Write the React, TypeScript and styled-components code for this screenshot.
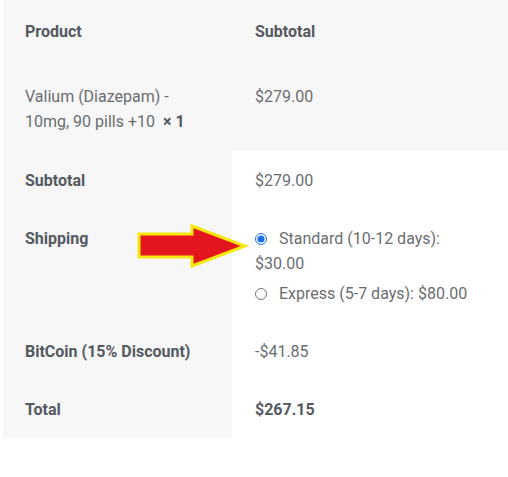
import React from 'react';
import styled, { createGlobalStyle } from 'styled-components';

const GlobalStyle = createGlobalStyle`
	body {
		margin: 0;
		background: #ffffff;
		font-family: Roboto, 'Liberation Sans', sans-serif;
	}
`;

type CellProps = { $white?: boolean };

function Arrow() {
	return (
		<View.Arrow width="112" height="46" viewBox="0 0 112 46">
			<polygon
				points="2,10 55,10 55,2 108,22 55,42 55,33 2,33"
				fill="#e3161f"
				stroke="#f6e80f"
				strokeWidth="3"
				strokeLinejoin="miter"
			/>
		</View.Arrow>
	);
}

function App() {
	return (
		<>
			<GlobalStyle />
			<View.Wrap>
				<View.Table>
					<tbody>
						<View.Row>
							<Text.Head>Product</Text.Head>
							<Text.Head>Subtotal</Text.Head>
						</View.Row>
						<View.Row>
							<Text.Item>
								Valium (Diazepam) -<br />
								10mg, 90 pills +10&nbsp; <strong>× 1</strong>
							</Text.Item>
							<Text.Item>$279.00</Text.Item>
						</View.Row>
						<View.Row>
							<Text.Label>Subtotal</Text.Label>
							<Text.Value $white>$279.00</Text.Value>
						</View.Row>
						<View.Row>
							<Text.Label>Shipping</Text.Label>
							<Text.Value $white>
								<View.Methods>
									<View.Method>
										<View.Radio type="radio" name="ship" defaultChecked />
										Standard (10-12 days):
										<br />
										$30.00
									</View.Method>
									<View.Method>
										<View.Radio type="radio" name="ship" />
										Express (5-7 days): $80.00
									</View.Method>
								</View.Methods>
							</Text.Value>
						</View.Row>
						<View.Row>
							<Text.Label>BitCoin (15% Discount)</Text.Label>
							<Text.Value $white>-$41.85</Text.Value>
						</View.Row>
						<View.Row>
							<Text.Label>Total</Text.Label>
							<Text.Value $white>
								<strong>$267.15</strong>
							</Text.Value>
						</View.Row>
					</tbody>
				</View.Table>
				<Arrow />
			</View.Wrap>
		</>
	);
}

export default App;

const View = {
	Wrap: styled.div`
		position: relative;
		margin-left: 3px;
		width: 505px;
	`,
	Table: styled.table`
		width: 100%;
		table-layout: fixed;
		border-collapse: collapse;
		border-spacing: 0;
		background: #f7f7f7;
		font-size: 16px;
		line-height: 25px;
		color: #6a6d70;
	`,
	Row: styled.tr``,
	Methods: styled.ul`
		list-style: none;
		margin: 0;
		padding: 0;
	`,
	Method: styled.li`
		margin: 0 0 5px;
		white-space: nowrap;
		&:last-child {
			margin-bottom: 0;
		}
	`,
	Radio: styled.input`
		width: 12px;
		height: 12px;
		margin: 0 12px 0 0;
		vertical-align: -1px;
		accent-color: #1a73e8;
	`,
	Arrow: styled.svg`
		position: absolute;
		left: 134px;
		top: 224px;
	`,
};

const cell = `
	text-align: left;
	vertical-align: top;
`;

const Text = {
	Head: styled.th`
		${cell}
		padding: 19px 22px 18px 23px;
		font-weight: 700;
		color: #54595f;
		&:first-child {
			width: 185px;
			padding-left: 22px;
		}
	`,
	Item: styled.td`
		${cell}
		padding: 22px 22px 17px 23px;
		&:first-child {
			padding-left: 22px;
		}
		strong {
			color: #54595f;
		}
	`,
	Label: styled.th`
		${cell}
		padding: 17px 22px 16px;
		font-weight: 700;
		color: #54595f;
	`,
	Value: styled.td<CellProps>`
		${cell}
		padding: 17px 22px 16px 23px;
		background: ${(p) => (p.$white ? '#ffffff' : 'transparent')};
		strong {
			color: #54595f;
		}
	`,
};
